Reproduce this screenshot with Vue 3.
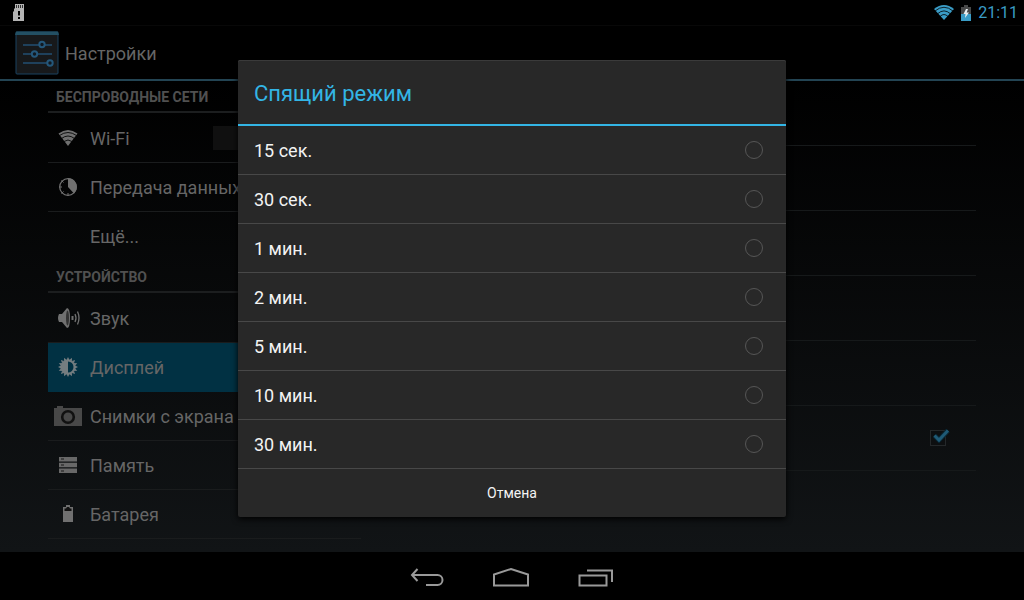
<script setup>
import { ref } from 'vue'

const sections = [
  {
    title: 'Беспроводные сети',
    items: [
      { id: 'wifi', label: 'Wi-Fi', toggle: true },
      { id: 'data', label: 'Передача данных' },
      { id: 'more', label: 'Ещё...', last: true },
    ],
  },
  {
    title: 'Устройство',
    items: [
      { id: 'sound', label: 'Звук' },
      { id: 'display', label: 'Дисплей', active: true },
      { id: 'camera', label: 'Снимки с экрана' },
      { id: 'storage', label: 'Память' },
      { id: 'battery', label: 'Батарея' },
    ],
  },
]

const options = ['15 сек.', '30 сек.', '1 мин.', '2 мин.', '5 мин.', '10 мин.', '30 мин.']
const selected = ref('')
const autoRotate = ref(true)
const wifi = ref(false)
const teeth = Array.from({ length: 16 }, (_, i) => i * 22.5)
</script>

<template>
  <div class="screen">
    <header class="status">
      <svg class="sd" width="12" height="17" viewBox="0 0 12 17" aria-hidden="true">
        <path d="M2 0h9v17H0V8l1-1V5l1-1z" fill="#b4b4b4" />
        <path d="M3.500 1v3M5.500 1v3M7.500 1v3M9.500 1v3" stroke="#333" stroke-width="1" />
        <path d="M6 7v4.500M6 13v2" stroke="#000" stroke-width="2" />
      </svg>
      <div class="status-right">
        <svg width="20" height="15" viewBox="0 0 20 15" aria-hidden="true">
          <path d="M0 4Q10-4 20 4L10 15z" fill="#3a9cc6" />
          <path d="M1 6Q10-1.500 19 6M3.500 8.800Q10 3 16.500 8.800M6 11.500Q10 7.500 14 11.500" fill="none" stroke="#000" stroke-width="0.800" />
        </svg>
        <svg width="10" height="16" viewBox="0 0 10 16" aria-hidden="true">
          <path d="M3 0h4v2h3v14H0V2h3z" fill="#484848" />
          <path d="M0 9h10v7H0z" fill="#3a9cc6" />
          <path d="M5 4L2.500 9h2L4 13l4-5.500H5.700L7 4z" fill="#e8eef0" />
        </svg>
        <time class="clock">21:11</time>
      </div>
    </header>

    <div class="actionbar">
      <svg width="44" height="44" viewBox="0 0 44 44" aria-hidden="true">
        <rect x="1" y="1" width="42" height="42" rx="1" fill="#17191b" stroke="#1b4360" />
        <path d="M1 0.500h42l1 3.500H0z" fill="#235064" />
        <path d="M8 14h29M8 23h29M8 32h29" stroke="#1f415c" stroke-width="2" />
        <g fill="#111820" stroke="#24577a" stroke-width="2">
          <circle cx="27" cy="13.500" r="2.700" />
          <circle cx="19.500" cy="23" r="2.700" />
          <circle cx="35" cy="32" r="2.700" />
        </g>
      </svg>
      <h1>Настройки</h1>
    </div>

    <main class="content">
      <nav class="sidebar">
        <section v-for="section in sections" :key="section.title">
          <h2>{{ section.title }}</h2>
          <div
            v-for="item in section.items"
            :key="item.id"
            class="item"
            :class="{ active: item.active, last: item.last }"
          >
            <a href="#" class="link">
              <svg class="icon" width="32" height="32" viewBox="0 0 32 32" aria-hidden="true">
                <g v-if="item.id === 'wifi'">
                  <path d="M6.500 11.500Q16 4.500 25.500 11.500L16 24z" fill="#707070" />
                  <path d="M7.500 13.500Q16 7.500 24.500 13.500M9.500 16.500Q16 11.500 22.500 16.500M12 19.500Q16 16.500 20 19.500" fill="none" stroke="#050606" stroke-width="0.900" />
                </g>
                <g v-else-if="item.id === 'data'">
                  <circle cx="16" cy="16" r="8.300" fill="none" stroke="#707070" stroke-width="1.300" />
                  <path d="M16 16V7a9 9 0 0 1 6 15.500z" fill="#707070" />
                  <path d="M7 16h3M16 22v3M9.500 9.500l2 2M9.500 22.500l2-2" stroke="#707070" />
                </g>
                <g v-else-if="item.id === 'sound'">
                  <path d="M7 12h3l5-6q3 0 3 10t-3 10l-5-6H7q-2-4 0-8z" fill="#707070" />
                  <ellipse cx="15.500" cy="16" rx="1.500" ry="7.500" fill="#333" />
                  <path d="M20.500 14v4" stroke="#707070" stroke-width="2" />
                  <path d="M23 12q2 4 0 8M25.500 9.500q3 6.500 0 13" fill="none" stroke="#707070" stroke-width="1.300" />
                </g>
                <g v-else-if="item.id === 'display'">
                  <g fill="#747d80">
                    <path v-for="a in teeth" :key="a" d="M14.500 9L16 6l1.500 3z" :transform="`rotate(${a} 16 16)`" />
                  </g>
                  <circle cx="16" cy="16" r="7.500" fill="#747d80" />
                  <path d="M16 10.500a5.500 5.500 0 0 1 0 11z" fill="#013143" />
                </g>
                <g v-else-if="item.id === 'camera'">
                  <path d="M2 8h3V6h6v2h19v18H2z" fill="#484848" />
                  <circle cx="16" cy="17" r="5.800" fill="#484848" stroke="#111" stroke-width="2.600" />
                </g>
                <g v-else-if="item.id === 'storage'">
                  <path d="M7 8h18v4.500H7zM7 13.700h18v4.500H7zM7 19.500h18V24H7z" fill="#686868" />
                  <path d="M9 10h3M9 16h3M9 22h3" stroke="#191919" />
                </g>
                <g v-else-if="item.id === 'battery'">
                  <path d="M14 7h4v2h3v15H11V9h3z" fill="#707070" />
                  <path d="M12.500 10.500h1.500l1-1.500h2l1 1.500h1.500V13h-7z" fill="#111" />
                </g>
              </svg>
              <span>{{ item.label }}</span>
            </a>
            <input v-if="item.toggle" v-model="wifi" type="checkbox" role="switch" class="switch" aria-label="Wi-Fi" />
          </div>
        </section>
      </nav>
      <div class="pane">
        <div v-for="n in 6" :key="n" class="pane-row">
          <label v-if="n === 6" class="check">
            <input v-model="autoRotate" type="checkbox" aria-label="Экран" />
            <svg v-if="autoRotate" width="20" height="18" viewBox="0 0 20 18" aria-hidden="true">
              <path d="M3.500 7.500L8 12l9-9.500" fill="none" stroke="#0a2632" stroke-width="5" />
              <path d="M3.500 7.500L8 12l9-9.500" fill="none" stroke="#1f5a76" stroke-width="3" />
            </svg>
          </label>
        </div>
      </div>
    </main>

    <footer class="navbar">
      <button type="button" aria-label="Назад">
        <svg width="36" height="20" viewBox="0 0 36 20">
          <path d="M8.500 1L3 7l5.500 6M3 7h25.500a5 5 0 0 1 0 10H17" />
        </svg>
      </button>
      <button type="button" aria-label="Домой">
        <svg width="38" height="20" viewBox="0 0 38 20">
          <path d="M2 17.500V6.500L19 1l17 5.500v11z" />
        </svg>
      </button>
      <button type="button" aria-label="Недавние">
        <svg width="36" height="20" viewBox="0 0 36 20">
          <path d="M2.500 7.500h27v10h-27zM10 2.500h25V14" />
        </svg>
      </button>
    </footer>

    <div class="overlay">
      <div class="dialog" role="dialog" aria-modal="true" aria-labelledby="dialog-title">
        <h2 id="dialog-title">Спящий режим</h2>
        <div role="radiogroup" aria-labelledby="dialog-title">
          <label v-for="option in options" :key="option" class="option">
            <span>{{ option }}</span>
            <input v-model="selected" type="radio" name="sleep" :value="option" />
          </label>
        </div>
        <button type="button" class="cancel">Отмена</button>
      </div>
    </div>
  </div>
</template>

<style>
body {
  margin: 0;
  background: #000;
}
</style>

<style scoped>
.screen {
  position: relative;
  display: flex;
  flex-direction: column;
  min-height: 100vh;
  overflow: hidden;
  font-family: Roboto, "Noto Sans", sans-serif;
  color: #666;
  background: #000;
}
h1,
h2 {
  margin: 0;
  font-weight: 400;
}
button,
input {
  appearance: none;
  margin: 0;
  padding: 0;
  border: 0;
  background: none;
  font: inherit;
  color: inherit;
}
svg {
  display: block;
  flex: none;
}
.status {
  display: flex;
  align-items: center;
  justify-content: space-between;
  height: 25px;
  padding: 0 6px 0 13px;
}
.status-right {
  display: flex;
  align-items: center;
  gap: 7px;
}
.clock {
  font-size: 16px;
  line-height: 24px;
  color: #3a9cc6;
}
.actionbar {
  display: flex;
  align-items: center;
  gap: 6px;
  height: 53px;
  padding-left: 15px;
  border-top: 1px solid #080808;
  border-bottom: 2px solid #234453;
}
.actionbar h1 {
  padding-top: 2px;
  font-size: 18px;
  line-height: 24px;
}
.content {
  flex: 1;
  display: flex;
  gap: 16px;
  padding: 0 48px;
  background: linear-gradient(#000, #111416);
}
.sidebar {
  flex: 1 1 0;
  min-width: 0;
}
.pane {
  flex: 1.914 1 0;
}
.sidebar h2 {
  margin-bottom: 1px;
  padding: 2px 8px 0;
  border-bottom: 2px solid #1c1e1f;
  font-size: 14px;
  line-height: 28px;
  font-weight: 700;
  text-transform: uppercase;
  color: #505050;
}
.item {
  display: flex;
  align-items: center;
  height: 48px;
  border-bottom: 1px solid #1a1c1d;
}
.item.last {
  border-color: transparent;
}
.item.active {
  background: #013143;
  border-color: #013143;
}
.link {
  flex: 1;
  display: flex;
  align-items: center;
  gap: 6px;
  padding-left: 4px;
  font-size: 18px;
  line-height: 24px;
  white-space: nowrap;
  color: inherit;
  text-decoration: none;
}
.link span,
.option span {
  padding-top: 2px;
}
.switch {
  width: 96px;
  height: 24px;
  margin-right: 52px;
  background: #101010;
}
.pane-row {
  display: flex;
  align-items: center;
  justify-content: flex-end;
  height: 64px;
  padding-right: 30px;
  border-bottom: 1px solid #16191a;
}
.check {
  position: relative;
  display: block;
  height: 16px;
}
.check input {
  display: block;
  box-sizing: border-box;
  width: 16px;
  height: 16px;
  border: 1px solid #24282a;
}
.check svg {
  position: absolute;
  left: 1px;
  top: -2px;
}
.navbar {
  display: flex;
  justify-content: center;
  align-items: center;
  gap: 48px;
  height: 48px;
  padding-right: 2px;
  background: #000;
}
.navbar button {
  display: flex;
  justify-content: center;
  width: 36px;
  padding-top: 3px;
}
.navbar path {
  fill: none;
  stroke: #999;
  stroke-width: 2;
}
.overlay {
  position: absolute;
  inset: 25px 0 48px;
  display: flex;
  align-items: center;
  justify-content: center;
}
.dialog {
  width: 548px;
  max-width: 100%;
  border-radius: 2px;
  background: #282828;
  box-shadow: 0 2px 6px #000, inset 0 1px #3a3a3a;
  color: #f3f3f3;
}
.dialog h2 {
  padding: 4px 16px 0;
  border-bottom: 2px solid #33b5e5;
  font-size: 22px;
  line-height: 60px;
  color: #33b5e5;
}
.option {
  display: flex;
  align-items: center;
  justify-content: space-between;
  height: 48px;
  padding: 0 23px 0 16px;
  border-bottom: 1px solid #484848;
  font-size: 18px;
  line-height: 24px;
}
.option input {
  box-sizing: border-box;
  width: 18px;
  height: 18px;
  border: 1px solid #565656;
  border-radius: 50%;
}
.cancel {
  display: block;
  width: 100%;
  height: 48px;
  font-size: 14px;
}
</style>
